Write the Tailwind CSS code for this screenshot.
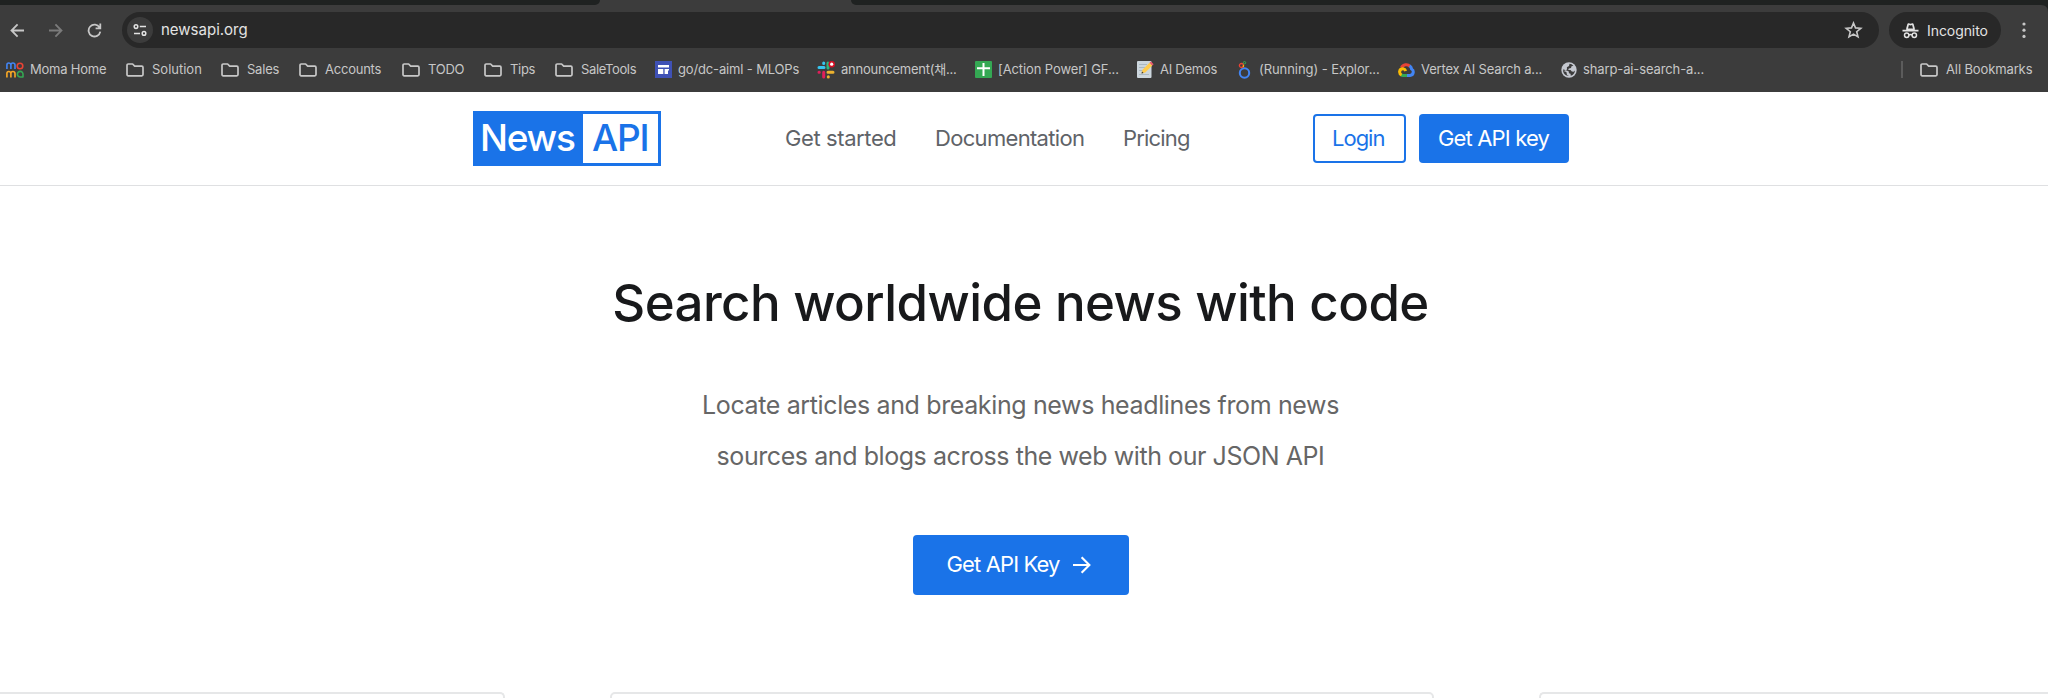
<!DOCTYPE html>
<html lang="en">
<head>
<meta charset="utf-8">
<title>News API</title>
<script src="https://cdn.jsdelivr.net/npm/@tailwindcss/browser@4"></script>
</head>
<body class="h-screen overflow-hidden bg-white font-['Inter','Noto_Sans_CJK_KR',sans-serif]">
<svg class="hidden">
  <symbol id="folder" viewBox="0 0 18 14"><path d="M1 2.2Q1 1 2.2 1H6.6L8.7 3.2H15.8Q17 3.2 17 4.4V11.6Q17 12.8 15.8 12.8H2.2Q1 12.8 1 11.6Z" fill="none" stroke="#c7c7c7" stroke-width="1.7" stroke-linejoin="round"/></symbol>
</svg>
<div class="flex h-screen flex-col overflow-hidden">

  <!-- Browser chrome -->
  <div class="h-[92px] shrink-0 bg-[#3c3c3c]">
    <div class="flex h-[5px] justify-between">
      <div class="w-[600px] rounded-br-[8px] bg-[#1f2221]"></div>
      <div class="w-[1197px] rounded-bl-[8px] bg-[#1f2221]"></div>
    </div>
    <div class="flex h-[7px] justify-end"><svg class="size-[7px]" viewBox="0 0 7 7"><path d="M0 0H7V7Q7 0 0 0Z" fill="#1f2221"/></svg></div>
    <div class="flex h-9 items-center">
      <svg class="ml-[10px] size-[15px]" viewBox="0 0 15 15" fill="none" stroke="#c7c7c7" stroke-width="1.8"><path d="M14 7.5H2M7.6 1.4L1.5 7.5L7.6 13.6"/></svg>
      <svg class="ml-[23px] size-[15px]" viewBox="0 0 15 15" fill="none" stroke="#7b7b7b" stroke-width="1.8"><path d="M1 7.5H13M7.4 1.4L13.5 7.5L7.4 13.6"/></svg>
      <svg class="ml-[24px] size-[15px]" viewBox="0 0 15 15" fill="none" stroke="#c7c7c7" stroke-width="1.8"><path d="M12.6 4.6A5.9 5.9 0 1 0 13.3 8.6M13.3 .6V5.3H8.6"/></svg>
      <div class="ml-5 flex h-9 w-[1757px] items-center rounded-full bg-[#282828] pl-[5px]">
        <div class="flex size-[26px] items-center justify-center rounded-full bg-[#3c3c3c]">
          <svg class="size-[14px]" viewBox="0 0 14 14" fill="none" stroke="#e3e3e3" stroke-width="1.5"><circle cx="3" cy="3.6" r="1.8"/><path d="M6.8 3.6H13M1 10.4H7"/><circle cx="11" cy="10.4" r="1.8"/></svg>
        </div>
        <span class="ml-[8px] pt-px text-[15px] text-[#e3e3e3]">newsapi.org</span>
        <svg class="mr-[16px] ml-auto size-[19px]" viewBox="0 0 19 19" fill="none" stroke="#c7c7c7" stroke-width="1.6"><path d="M9.5 2L11.5 6.9L16.8 7.3L12.7 10.7L14 15.9L9.5 13.1L5 15.9L6.3 10.7L2.2 7.3L7.5 6.9Z"/></svg>
      </div>
      <div class="ml-[10px] flex h-9 w-[112px] items-center rounded-full bg-[#282828] pl-[13px]">
        <svg class="size-[17px]" viewBox="0 0 17 17"><path d="M4.2 6.3L5.4 2Q5.7 1 6.7 1.3L8.5 1.8L10.3 1.3Q11.3 1 11.6 2L12.8 6.3V7.8H16.5V9.4H.5V7.8H4.2ZM6 6.4H11L10.1 3L8.5 3.5L6.9 3Z" fill="#e3e3e3" fill-rule="evenodd"/><g fill="none" stroke="#e3e3e3" stroke-width="1.5"><circle cx="4.7" cy="13.3" r="2.2"/><circle cx="12.3" cy="13.3" r="2.2"/><path d="M6.9 13Q8.5 12 10.1 13"/></g></svg>
        <span class="ml-[8px] text-[14px] tracking-[-0.07px] text-[#e3e3e3]">Incognito</span>
      </div>
      <svg class="ml-[21px] h-[18px] w-1" viewBox="0 0 4 18" fill="#c7c7c7"><circle cx="2" cy="3" r="1.6"/><circle cx="2" cy="9.2" r="1.6"/><circle cx="2" cy="15.4" r="1.6"/></svg>
    </div>

    <!-- Bookmarks -->
    <div class="flex h-[43px] items-center pl-[6px] text-[13px] whitespace-nowrap text-[#c7c7c7]">
      <div class="flex w-[120px] items-center gap-[6px]"><svg class="h-4 w-[18px]" viewBox="0 0 18 16" fill="none" stroke-width="1.6"><path d="M.9 7V3Q.9 1 2.8 1T4.9 3V7M4.9 3Q4.9 1 6.9 1T9 3V7" stroke="#4285f4"/><circle cx="14" cy="4" r="2.8" stroke="#ea4335"/><path d="M.9 15.5V11.5Q.9 9.5 2.8 9.5T4.9 11.5V15.5M4.9 11.5Q4.9 9.5 6.9 9.5T9 11.5V15.5" stroke="#f9a825"/><path d="M17 15.5V12.3A2.8 2.8 0 1 0 14.2 15H17" stroke="#34a853"/></svg><span class="tracking-[-0.22px]">Moma Home</span></div>
      <div class="flex w-[95px] items-center gap-[8px]"><svg class="h-[14px] w-[18px]"><use href="#folder"/></svg><span>Solution</span></div>
      <div class="flex w-[78px] items-center gap-[8px]"><svg class="h-[14px] w-[18px]"><use href="#folder"/></svg><span class="tracking-[-0.22px]">Sales</span></div>
      <div class="flex w-[103px] items-center gap-[8px]"><svg class="h-[14px] w-[18px]"><use href="#folder"/></svg><span class="tracking-[-0.23px]">Accounts</span></div>
      <div class="flex w-[82px] items-center gap-[8px]"><svg class="h-[14px] w-[18px]"><use href="#folder"/></svg><span class="tracking-[-0.28px]">TODO</span></div>
      <div class="flex w-[71px] items-center gap-[8px]"><svg class="h-[14px] w-[18px]"><use href="#folder"/></svg><span class="tracking-[-0.3px]">Tips</span></div>
      <div class="flex w-[100px] items-center gap-[8px]"><svg class="h-[14px] w-[18px]"><use href="#folder"/></svg><span class="tracking-[-0.35px]">SaleTools</span></div>
      <div class="flex w-[162px] items-center gap-[6px]"><svg class="size-[17px]" viewBox="0 0 17 17"><path d="M0 0H17V17H0Z" fill="#3f51b5"/><path d="M3 4H14V6.5H3ZM3 8H8.3V13H3ZM9.6 8H14V9.6H13V13H9.6Z" fill="#fff"/></svg><span class="tracking-[-0.15px]">go/dc-aiml - MLOPs</span></div>
      <div class="flex w-[158px] items-center gap-[6px]"><svg class="size-[18px]" viewBox="0 0 18 18"><g stroke-width="3" stroke-linecap="round"><path d="M2 6.5H7M6.7 2V2.5" stroke="#36c5f0"/><path d="M11 2V7" stroke="#2eb67d"/><path d="M11 11.3H16M11.3 16V15.8" stroke="#ecb22e"/><path d="M6.7 11.3V16M2 11.3H2.3" stroke="#e01e5a"/></g><circle cx="14.7" cy="3.2" r="3.3" fill="#d50f25"/><circle cx="14.7" cy="3.2" r="1.6" fill="#fff"/></svg><span class="tracking-[-0.25px]">announcement(채...</span></div>
      <div class="flex w-[162px] items-center gap-[6px]"><svg class="size-[17px]" viewBox="0 0 17 17"><rect width="17" height="17" rx="1" fill="#34a853"/><path d="M8.5 2V15M2 7.2H15" stroke="#fff" stroke-width="2"/></svg><span class="tracking-[-0.1px]">[Action Power] GF...</span></div>
      <div class="flex w-[101px] items-center gap-[6px]"><svg class="size-[17px] overflow-visible" viewBox="0 0 17 17"><rect y="0" width="14.5" height="17" rx="1" fill="#ccd6dd"/><path d="M2 3.5H10M2 6.5H8M2 9.5H6M2 13.5H12" stroke="#aab8c2"/><path d="M4.5 12.5L5.5 8.8L12.5 1.8L15.3 4.6L8.3 11.6Z" fill="#ffcc4d"/><path d="M12.5 1.8L14 .5L16.6 3.2L15.3 4.6Z" fill="#ea596e"/><path d="M4.5 12.5L5 10.5L6.6 12Z" fill="#292f33"/></svg><span class="tracking-[-0.26px]">AI Demos</span></div>
      <div class="flex w-[160px] items-center gap-[8px]"><svg class="h-[18px] w-[13px]" viewBox="0 0 13 18" fill="none"><circle cx="6.5" cy="12" r="4.7" stroke="#4285f4" stroke-width="2"/><circle cx="3.4" cy="4.5" r="2" stroke="#ea4335" stroke-width="1.3"/><path d="M5 6Q5.8 5.2 5.5 4" stroke="#fbbc04" stroke-width="1.3"/><circle cx="6.5" cy="1.7" r="1.2" stroke="#34a853" stroke-width="1"/></svg><span class="tracking-[-0.07px]">(Running) - Explor...</span></div>
      <div class="flex w-[163px] items-center gap-[6px]"><svg class="h-[14px] w-[17px]" viewBox="0 0 17 14" fill="none" stroke-width="3"><path d="M3.5 4.7A5.2 5.2 0 0 1 12.1 3.4" stroke="#ea4335"/><path d="M11.6 2.8Q13.4 4.1 13.6 6Q15.4 7 15.3 9Q15 12.2 12 12.4H8.5" stroke="#4285f4"/><path d="M9 12.4H5Q3.8 12.4 3 11.8" stroke="#34a853"/><path d="M3.6 12Q1.5 11 1.6 8.7Q2 5.7 5 5.8Q7 6 7.8 8" stroke="#fbbc04"/></svg><span class="tracking-[-0.17px]">Vertex AI Search a...</span></div>
      <div class="flex w-[340px] items-center gap-[6px]"><svg class="size-4" viewBox="0 0 16 16"><circle cx="8" cy="8" r="7.7" fill="#c4c7cf"/><path d="M8.5 1.8Q10.8 2 12.4 3.7L10.5 4.2L10 6L7.8 6.4L7.2 8H9.5L10.8 9.6L12.6 9.8L14 8.5Q13.7 12.6 9.8 13.8L9.5 11.8L8 11.2L7.6 9.3L4.8 8.2L2.1 7.2Q2.3 8.5 3.2 9.2L5.4 10.1L6 12.8Q7 13.6 8 14Q3 14.2 1.9 8.6L3.6 8.8L6 7.4L5.9 5.2L8 4Z" fill="#3c3c3c"/></svg><span class="tracking-[-0.12px]">sharp-ai-search-a...</span></div>
      <div class="h-[17px] w-0.5 bg-[#5c5c5c]"></div>
      <div class="ml-[17px] flex items-center gap-[8px]"><svg class="h-[14px] w-[18px]"><use href="#folder"/></svg><span class="tracking-[-0.12px]">All Bookmarks</span></div>
    </div>
  </div>

  <!-- Site header -->
  <header class="flex h-[94px] shrink-0 items-center border-b border-[#dfe0e2] pl-[473px] text-[22px] whitespace-nowrap text-[#5f6368]">
    <div class="flex h-[55px] w-[188px] border-[3px] border-[#1a73e8] bg-[#1a73e8] text-[37px] leading-[48px] font-medium">
      <span class="w-[107px] pl-[4px] tracking-[-1.26px] text-white">News</span>
      <span class="flex-1 bg-white pl-[9px] tracking-[-1.2px] text-[#1a73e8]">API</span>
    </div>
    <nav class="flex">
      <span class="ml-[124px] w-[150px] tracking-[-0.4px]">Get started</span>
      <span class="w-[188px] tracking-[-0.68px]">Documentation</span>
      <span class="w-[190px] tracking-[-0.82px]">Pricing</span>
    </nav>
    <div class="flex h-[49px] w-[93px] items-center rounded-[4px] border-2 border-[#1a73e8] pl-[17px] tracking-[-1px] text-[#1a73e8]">Login</div>
    <div class="ml-[13px] flex h-[49px] w-[150px] items-center rounded-[4px] bg-[#1a73e8] pl-[19px] tracking-[-0.85px] text-white">Get API key</div>
  </header>

  <!-- Hero -->
  <main class="flex w-[2041px] flex-1 flex-col items-center whitespace-nowrap">
    <h1 class="mt-[85px] text-[51px] leading-[64px] font-medium tracking-[-0.56px] text-[#18191b]">Search worldwide news with code</h1>
    <p class="mt-[45px] text-center text-[25px] leading-[51.3px] text-[#666]"><span class="tracking-[-0.37px]">Locate articles and breaking news headlines from news</span><br><span class="tracking-[-0.43px]">sources and blogs across the web with our JSON API</span></p>
    <div class="mt-[52px] flex h-[60px] w-[216px] shrink-0 items-center rounded-[4px] bg-[#1a73e8] pl-[34px] text-[22px] tracking-[-0.87px] text-white">Get API Key
      <svg class="ml-[13px] size-[18px]" viewBox="0 0 18 18" fill="none" stroke="#fff" stroke-width="2.1"><path d="M0 9H16M8.6 1.2L16.4 9L8.6 16.8"/></svg>
    </div>
  </main>

  <!-- Example cards -->
  <div class="flex h-[6px] shrink-0 items-start">
    <div class="h-5 w-[505px] shrink-0 rounded-tr-[5px] border-t-2 border-r-2 border-[#e6e7e8]"></div>
    <div class="ml-[105px] h-5 w-[824px] shrink-0 rounded-t-[5px] border-2 border-[#e6e7e8]"></div>
    <div class="ml-[105px] h-5 flex-1 rounded-tl-[5px] border-t-2 border-l-2 border-[#e6e7e8]"></div>
  </div>
</div>
</body>
</html>
